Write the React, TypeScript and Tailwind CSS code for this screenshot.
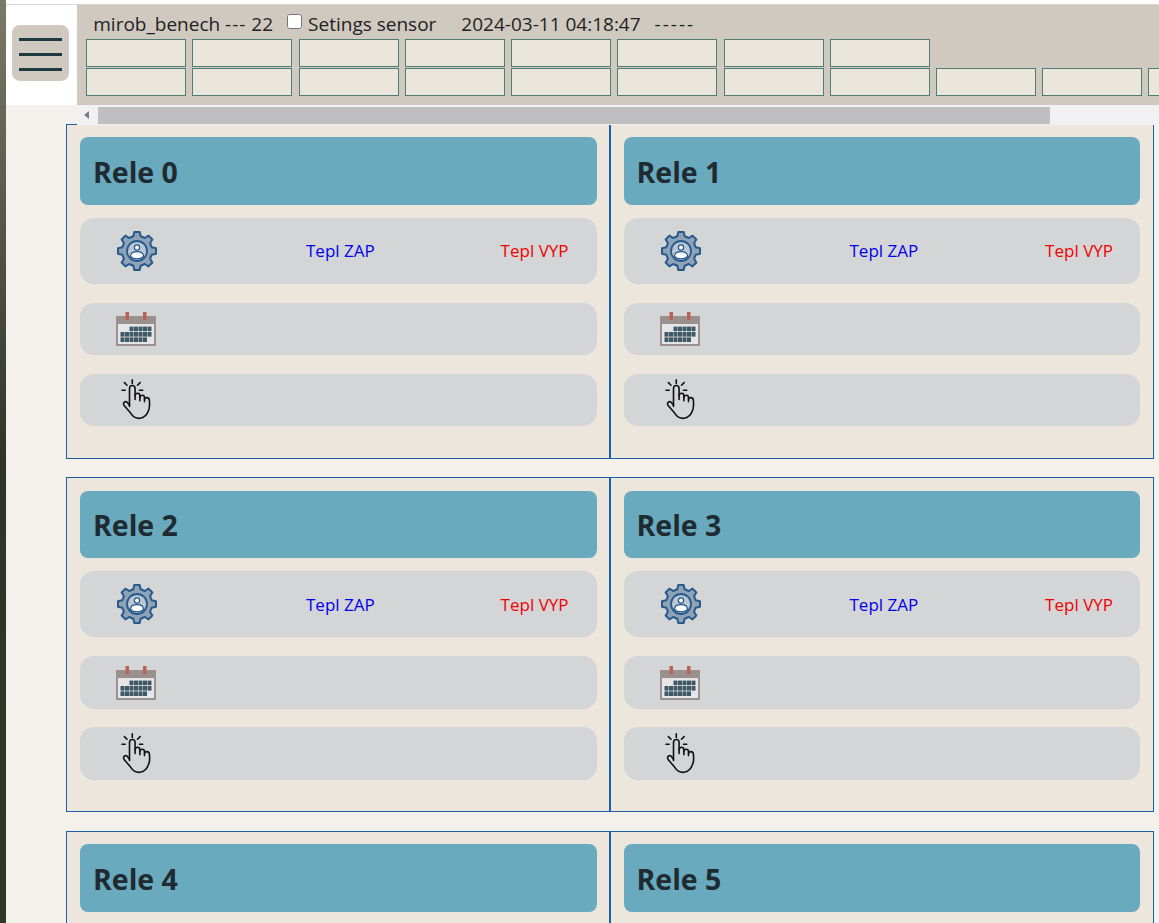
import React from 'react';

const FONT = "font-['Open_Sans','Noto_Sans',sans-serif]";

const topRow = [0, 1, 2, 3, 4, 5, 6, 7];
const bottomRow = [0, 1, 2, 3, 4, 5, 6, 7, 8, 9, 10];

// 8 tooth gear outline, centre 20,20
function gearPath() {
  const pts: string[] = [];
  for (let i = 0; i < 8; i++) {
    const a = (i * Math.PI) / 4 - Math.PI / 2;
    const step = Math.PI / 8;
    const list: [number, number][] = [
      [15.2, a - step * 0.62],
      [19.2, a - step * 0.36],
      [19.2, a + step * 0.36],
      [15.2, a + step * 0.62],
    ];
    list.forEach(([r, t]) => {
      pts.push(`${(20 + r * Math.cos(t)).toFixed(2)} ${(20 + r * Math.sin(t)).toFixed(2)}`);
    });
  }
  return `M${pts.join('L')}Z`;
}

function GearIcon() {
  return (
    <svg width="40" height="40" viewBox="0 0 40 40" className="shrink-0">
      <path d={gearPath()} fill="#8fa3b8" stroke="#27598a" strokeWidth="2" strokeLinejoin="round" />
      <circle cx="20" cy="20" r="10" fill="#b9c6d3" stroke="#27598a" strokeWidth="1.8" />
      <circle cx="20" cy="16.5" r="2.6" fill="#fff" stroke="#27598a" strokeWidth="1.2" />
      <path d="M13.5 25.500c0-3.400 2.800-4.800 6.500-4.800s6.500 1.400 6.500 4.800c-1.700 1.600-4 2.400-6.500 2.400s-4.800-.8-6.500-2.400Z" fill="#fff" stroke="#27598a" strokeWidth="1.2" />
    </svg>
  );
}

function CalendarIcon() {
  const cells = [
    [2, 0], [3, 0], [4, 0], [5, 0], [6, 0],
    [0, 1], [1, 1], [2, 1], [3, 1], [4, 1], [5, 1], [6, 1],
    [0, 2], [1, 2], [2, 2], [3, 2], [4, 2], [5, 2],
  ];
  return (
    <svg width="42" height="36" viewBox="0 0 42 36" className="shrink-0">
      <rect x="1" y="5" width="40" height="30" fill="#9a918f" />
      <rect x="3" y="13" width="36" height="20" fill="#e6e6e6" />
      <rect x="10.500" y="1" width="3.500" height="8" fill="#b5625a" />
      <rect x="28" y="1" width="3.500" height="8" fill="#b5625a" />
      {cells.map(([c, r]) => (
        <rect key={`${c}-${r}`} x={5.5 + c * 4.5} y={15.6 + r * 5.4} width="4" height="4.600" fill="#3f5866" />
      ))}
    </svg>
  );
}

function HandIcon() {
  return (
    <svg width="32" height="42" viewBox="0 0 32 42" className="shrink-0" fill="none" stroke="#111" strokeWidth="1.600" strokeLinecap="round" strokeLinejoin="round">
      <path d="M8.500 27.500V9.500c0-1.800 1.200-3 2.800-3s2.800 1.200 2.800 3v11" />
      <path d="M14.100 16.500c.2-1.500 1.200-2.300 2.400-2.300 1.400 0 2.400 1 2.400 2.500v5" />
      <path d="M18.900 18.200c.3-1.300 1.200-2 2.300-2 1.300 0 2.300 1 2.300 2.400v4" />
      <path d="M23.500 20.300c.4-1.100 1.300-1.700 2.300-1.700 1.400 0 2.400 1 2.600 2.500.4 3.300.5 6.500-.5 9.500-1.300 4-4 8.300-9 8.700-4.400.3-7.200-1.800-9.300-5.200L3.100 26.500c-.9-1.400-.7-2.800.4-3.500 1.100-.7 2.400-.3 3.300.9l1.700 2.300" />
      <path d="M11.300 4.500V0.800M6 6.200 3.400 3.600M4.200 11.200H1M16.500 6.200l2.600-2.600M18.500 11.200h3.200" />
    </svg>
  );
}

function ReleCard({ index, first, headerOnly }: { index: number; first: boolean; headerOnly?: boolean }) {
  return (
    <div className={`flex-1 h-[335px] bg-[#ede6dc] border border-[#1a5fa8] pt-[12.4px] pl-[13px] ${first ? 'pr-[12px]' : 'pr-[13px]'}`}>
      <div className="h-[67.5px] rounded-lg bg-[#69aabf] flex items-center pl-[13px] pt-[2px] mb-[13px]">
        <h2 className="text-[28.500px] font-bold text-[#1f2b30]">Rele {index}</h2>
      </div>
      {!headerOnly && (
        <>
          <div className={`h-[66px] rounded-[14px] bg-[#d4d5d7] flex items-center pl-[37px] mb-[19px] text-[17px] ${first ? 'pr-[28px]' : 'pr-[27px]'}`}>
            <GearIcon />
            <span className="ml-[149px] text-[#0000ee]">Tepl ZAP</span>
            <span className="ml-auto text-[#f00000]">Tepl VYP</span>
          </div>
          <div className="h-[52.5px] rounded-[14px] bg-[#d4d5d7] flex items-center pl-[35px] mb-[18.5px]">
            <CalendarIcon />
          </div>
          <div className="h-[52.5px] rounded-[14px] bg-[#d4d5d7] flex items-center pl-[41px]">
            <HandIcon />
          </div>
        </>
      )}
    </div>
  );
}

export default function App() {
  return (
    <div className={`relative flex h-[923px] w-[1159px] overflow-hidden bg-[#f4f1ed] ${FONT}`}>
      <div className="w-[6px] shrink-0 bg-gradient-to-b from-[#7a7a68] via-[#2e3528] to-[#2c3a22]" />

      <div className="flex-1 min-w-0">
        <div className="h-[5px] bg-white border-b border-[#d8d6d0]" />
        <div className="flex h-[100px]">
          <div className="w-[71px] shrink-0 bg-white flex items-start pl-[6px] pt-[20px]">
            <button className="w-[57px] h-[56px] rounded-lg bg-[#d0c9c0] flex flex-col items-center justify-center gap-[12px] pt-[2px]">
              <span className="block w-[43px] h-[3px] bg-[#1d3a40]" />
              <span className="block w-[43px] h-[3px] bg-[#1d3a40]" />
              <span className="block w-[43px] h-[3px] bg-[#1d3a40]" />
            </button>
          </div>
          <div className="flex-1 min-w-0 bg-[#d0c9c0] overflow-hidden pl-[9.25px]">
            <div className="h-[34px] pl-[7px] flex items-center text-[#222] text-[19px] whitespace-nowrap pt-[4px]">
              <span>mirob_benech <span className="tracking-[1px]">---</span> 22</span>
              <input type="checkbox" className="ml-[14px] w-[15px] h-[15px] -mt-[5px]" />
              <span className="ml-[6px]">Setings sensor</span>
              <span className="ml-[25px]">2024-03-11 04:18:47</span>
              <span className="ml-[14px] tracking-[2px]">-----</span>
            </div>
            <div className="flex gap-[6.22px] w-max">
              {topRow.map((i) => (
                <div key={i} className="w-[100px] h-[28px] bg-[#ebe6dc] border border-[#4f7d74]" />
              ))}
            </div>
            <div className="flex gap-[6.22px] w-max mt-px">
              {bottomRow.map((i) => (
                <div key={i} className="w-[100px] h-[28px] bg-[#ebe6dc] border border-[#4f7d74]" />
              ))}
            </div>
          </div>
        </div>

        <div className="pl-[60px] pr-[5px] pt-[19px] flex flex-col gap-[18.4px]">
          {[0, 2, 4].map((n) => (
            <div key={n} className="flex">
              <ReleCard index={n} first headerOnly={n === 4} />
              <ReleCard index={n + 1} first={false} headerOnly={n === 4} />
            </div>
          ))}
        </div>
      </div>

      {/* fake horizontal scrollbar of the header strip */}
      <div className="absolute left-[77px] right-0 top-[105px] h-[20px] bg-[#f1f1f3] pt-[2px]">
        <div className="absolute left-[7px] top-[6px] w-0 h-0 border-y-[4px] border-y-transparent border-r-[5px] border-r-[#7d7d7d]" />
        <div className="ml-[21px] w-[952px] h-[17px] bg-[#bfbfc1]" />
      </div>
    </div>
  );
}
